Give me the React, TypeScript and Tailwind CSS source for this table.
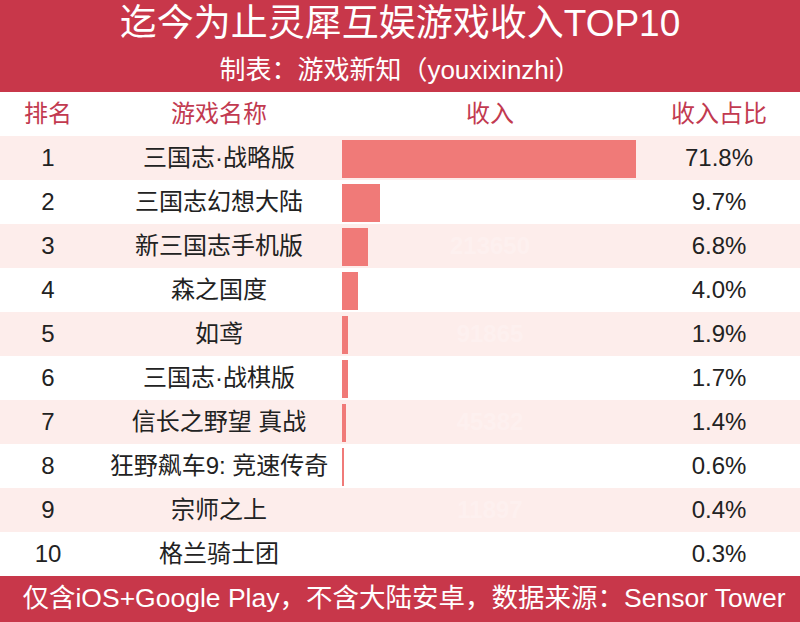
import React from "react";

type Row = {
  rank: number;
  name: string;
  pct: string;
  barWidth: number;
  ghost?: string;
};

const rows: Row[] = [
  { rank: 1, name: "三国志·战略版", pct: "71.8%", barWidth: 294 },
  { rank: 2, name: "三国志幻想大陆", pct: "9.7%", barWidth: 38 },
  { rank: 3, name: "新三国志手机版", pct: "6.8%", barWidth: 26, ghost: "213650" },
  { rank: 4, name: "森之国度", pct: "4.0%", barWidth: 16 },
  { rank: 5, name: "如鸢", pct: "1.9%", barWidth: 6, ghost: "91865" },
  { rank: 6, name: "三国志·战棋版", pct: "1.7%", barWidth: 6 },
  { rank: 7, name: "信长之野望 真战", pct: "1.4%", barWidth: 4, ghost: "45382" },
  { rank: 8, name: "狂野飙车9: 竞速传奇", pct: "0.6%", barWidth: 2 },
  { rank: 9, name: "宗师之上", pct: "0.4%", barWidth: 0, ghost: "11897" },
  { rank: 10, name: "格兰骑士团", pct: "0.3%", barWidth: 0 },
];

function TableRow({ row, striped }: { row: Row; striped: boolean }) {
  return (
    <div
      className={`grid h-[44px] grid-cols-[96px_246px_296px_162px] items-center text-[24px] text-[#222222] ${
        striped ? "bg-[#fdedeb]" : "bg-white"
      }`}
    >
      <div className="text-center">{row.rank}</div>
      <div className="whitespace-nowrap text-center">{row.name}</div>
      <div className="relative flex h-full items-center">
        <div
          className="mt-[2px] h-[38px] bg-[#f07a78]"
          style={{ width: row.barWidth }}
        />
        {/* value labels are white, so they only show faintly on striped rows */}
        {row.ghost ? (
          <span className="absolute inset-x-0 text-center font-bold text-white opacity-20">
            {row.ghost}
          </span>
        ) : null}
      </div>
      <div className="text-center">{row.pct}</div>
    </div>
  );
}

export default function App() {
  return (
    <div className="h-[622px] w-[800px] overflow-hidden bg-white font-['Liberation_Sans','Noto_Sans_CJK_SC',sans-serif]">
      <div className="flex h-[92px] flex-col items-center bg-[#c8374a] text-white">
        <div className="mt-[2px] whitespace-nowrap text-[37px] leading-[44px]">
          迄今为止灵犀互娱游戏收入TOP10
        </div>
        <div className="mt-[8px] whitespace-nowrap text-[26px] leading-[32px]">
          制表：游戏新知（youxixinzhi）
        </div>
      </div>

      <div className="grid h-[44px] grid-cols-[96px_246px_296px_162px] items-center text-[24px] text-[#c23a50]">
        <div className="text-center">排名</div>
        <div className="text-center">游戏名称</div>
        <div className="text-center">收入</div>
        <div className="text-center">收入占比</div>
      </div>

      {rows.map((row, i) => (
        <TableRow key={row.rank} row={row} striped={i % 2 === 0} />
      ))}

      <div className="flex h-[46px] items-center justify-center bg-[#c8374a] pl-[8px] whitespace-nowrap text-[26.5px] text-white">
        仅含iOS+Google Play，不含大陆安卓，数据来源：Sensor Tower
      </div>
    </div>
  );
}
